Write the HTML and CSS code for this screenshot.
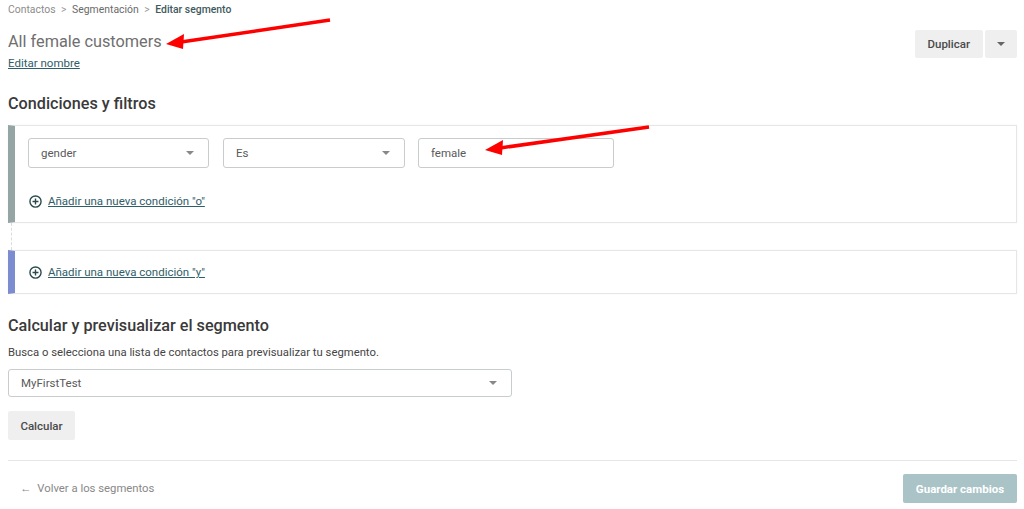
FILE: index.html
```html
<!DOCTYPE html>
<html lang="es">
<head>
    <meta charset="UTF-8">
    <title>Editar segmento</title>
    <link rel="stylesheet" href="styles.css">
</head>
<body>
<div class="page">

    <!-- Breadcrumb -->
    <div class="crumbs">
        <span class="crumb-first">Contactos</span>
        <span class="sep">&gt;</span>
        <span class="crumb-mid">Segmentación</span>
        <span class="sep">&gt;</span>
        <span class="crumb-last">Editar segmento</span>
    </div>

    <!-- Header -->
    <div class="header">
        <div class="name-block">
            <h1 class="seg-name">All female customers</h1>
            <a class="link small" href="#">Editar nombre</a>
        </div>
        <div class="btn-group">
            <button class="btn btn-grey">Duplicar</button>
            <button class="btn btn-grey btn-caret"><span class="caret"></span></button>
        </div>
    </div>

    <!-- Conditions -->
    <h2 class="section-title">Condiciones y filtros</h2>

    <div class="card card-or">
        <div class="cond-row">
            <div class="field sel w1">gender <span class="caret"></span></div>
            <div class="field sel w2">Es <span class="caret"></span></div>
            <div class="field w3">female</div>
        </div>
        <div class="add-row">
            <svg class="plus" width="13" height="13" viewBox="0 0 14 14"><circle cx="7" cy="7" r="6" fill="none" stroke="#2b4a4c" stroke-width="1.5"/><path d="M7 3.8v6.4M3.8 7h6.4" stroke="#2b4a4c" stroke-width="1.5"/></svg>
            <a class="link" href="#">Añadir una nueva condición "o"</a>
        </div>
    </div>

    <div class="connector"></div>

    <div class="card card-and">
        <div class="add-row">
            <svg class="plus" width="13" height="13" viewBox="0 0 14 14"><circle cx="7" cy="7" r="6" fill="none" stroke="#2b4a4c" stroke-width="1.5"/><path d="M7 3.8v6.4M3.8 7h6.4" stroke="#2b4a4c" stroke-width="1.5"/></svg>
            <a class="link" href="#">Añadir una nueva condición "y"</a>
        </div>
    </div>

    <!-- Preview -->
    <h2 class="section-title preview-title">Calcular y previsualizar el segmento</h2>
    <p class="hint">Busca o selecciona una lista de contactos para previsualizar tu segmento.</p>
    <div class="field sel list-select">MyFirstTest <span class="caret"></span></div>
    <button class="btn btn-grey btn-calc">Calcular</button>

    <!-- Footer -->
    <div class="footer">
        <a class="back" href="#"><span class="back-arrow">&larr;</span>Volver a los segmentos</a>
        <button class="btn btn-save">Guardar cambios</button>
    </div>

    <!-- annotation arrows -->
    <svg class="arrow arrow-1" width="170" height="40" viewBox="0 0 170 40">
        <path d="M167 3 L18 25" stroke="#f00" stroke-width="3.5"/>
        <path d="M3 27 L21 17 L20 32 Z" fill="#f00"/>
    </svg>
    <svg class="arrow arrow-2" width="170" height="40" viewBox="0 0 170 40">
        <path d="M167 3 L18 24" stroke="#f00" stroke-width="3.5"/>
        <path d="M3 26 L21 16 L20 31 Z" fill="#f00"/>
    </svg>
</div>
</body>
</html>
```

FILE: styles.css
```css
body {
    margin: 0;
    font-family: Roboto, "Liberation Sans", Arial, sans-serif;
    color: #333;
    background: #fff;
}

.page {
    position: relative;
    padding: 0 7px 0 8px;
}

/* Breadcrumb */
.crumbs {
    padding-top: 3px;
    font-size: 10.4px;
    line-height: 14px;
    color: #8c8c8c;
}

.crumbs .sep {
    margin: 0 3px;
    color: #999;
}

.crumb-mid { color: #6a6a6a; }
.crumb-last { color: #3f5a5d; font-weight: 500; }

/* Header */
.header {
    display: flex;
    justify-content: space-between;
    align-items: flex-start;
}

.name-block {
    font-size: 11.5px;
    line-height: 16px;
}

.seg-name {
    margin: 13px 0 1px;
    font-size: 16.3px;
    line-height: 24px;
    font-weight: 400;
    color: #6f6f6f;
}

.link {
    color: #2f5d68;
    font-size: 11.5px;
    line-height: 16px;
}

.link.small {
    display: block;
    width: fit-content;
}

.btn-group {
    display: flex;
    gap: 2px;
    margin-top: 13px;
}

.btn {
    border: none;
    font-family: inherit;
    font-size: 11.5px;
    font-weight: 500;
    border-radius: 2px;
    cursor: pointer;
}

.btn-grey {
    background: #efefef;
    color: #4a4a4a;
    height: 28px;
    padding: 0 13px;
}

.btn-caret {
    width: 32px;
    padding: 0;
    display: flex;
    align-items: center;
    justify-content: center;
}

.caret {
    display: inline-block;
    width: 0;
    height: 0;
    border-left: 4px solid transparent;
    border-right: 4px solid transparent;
    border-top: 4px solid #666;
}

/* Conditions */
.section-title {
    margin: 21px 0 0;
    font-size: 16.2px;
    line-height: 24px;
    font-weight: 500;
    color: #3a3a3a;
}

.card {
    border: 1px solid #e6e6e6;
    border-left: 7px solid #95a5a3;
    padding: 12px 12px 13px 13px;
    box-shadow: 0 0 2px rgba(0, 0, 0, 0.04);
}

.card-or { margin-top: 9px; }

.card-and {
    border-left-color: #7b8cd0;
    padding-top: 13px;
    padding-bottom: 13px;
}

.cond-row {
    display: flex;
    gap: 14px;
}

.field {
    box-sizing: border-box;
    height: 30px;
    border: 1px solid #c9cccc;
    border-radius: 3px;
    padding: 0 12px;
    display: flex;
    align-items: center;
    justify-content: space-between;
    font-size: 11.5px;
    color: #5a5a5a;
}

.field .caret { border-top-color: #888; margin-right: 2px; }

.w1 { width: 181px; }
.w2 { width: 182px; }
.w3 { width: 196px; margin-left: -1px; }

.add-row {
    display: flex;
    align-items: center;
    gap: 6px;
    margin-top: 25px;
    padding-left: 1px;
}

.card-and .add-row { margin-top: 0; }

.connector {
    height: 27px;
    margin-left: 3px;
    border-left: 1px dashed #dcdcdc;
}

/* Preview */
.preview-title { margin-top: 20px; }

.hint {
    margin: 7px 0 0;
    font-size: 11.3px;
    line-height: 16px;
    color: #444;
}

.list-select {
    width: 504px;
    height: 28px;
    margin-top: 8px;
}

.btn-calc {
    display: block;
    margin-top: 14px;
    height: 29px;
    width: 67px;
    padding: 0;
}

/* Footer */
.footer {
    margin-top: 20px;
    border-top: 1px solid #e6e6e6;
    padding-top: 13px;
    display: flex;
    justify-content: space-between;
    align-items: center;
}

.back {
    margin-left: 12px;
    font-size: 11.3px;
    color: #888;
    text-decoration: none;
}

.back-arrow {
    margin-right: 6px;
}

.btn-save {
    background: #a9c3c6;
    color: #fff;
    height: 29px;
    width: 114px;
    font-weight: 700;
}

/* Annotation arrows */
.arrow {
    position: absolute;
}

.arrow-1 { left: 163px; top: 17px; }
.arrow-2 { left: 482px; top: 124px; }
```
